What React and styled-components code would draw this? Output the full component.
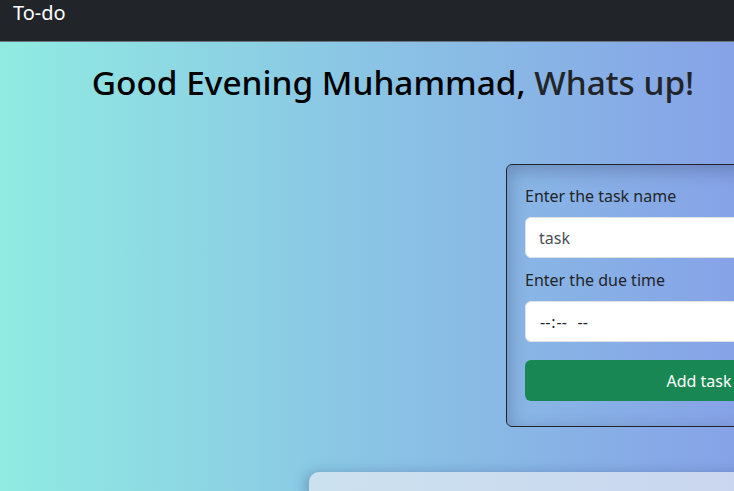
import styled, { createGlobalStyle } from 'styled-components';

const GlobalStyle = createGlobalStyle`
	html, body {
		margin: 0;
		padding: 0;
		overflow: hidden;
	}
	body {
		font-family: 'Noto Sans', 'Open Sans', sans-serif;
		color: #212529;
	}
`;

const App = () => {
	return (
		<>
			<GlobalStyle />
			<Navbar>
				<Brand>To-do</Brand>
			</Navbar>
			<Main>
				<Title>
					<Greeting>Good Evening Muhammad,</Greeting> Whats up!
				</Title>
				<FormRow>
					<Spacer />
					<Card>
						<Label htmlFor='task'>Enter the task name</Label>
						<Input id='task' type='text' placeholder='task' />
						<Label htmlFor='due'>Enter the due time</Label>
						<Input id='due' type='time' />
						<Button>Add task</Button>
					</Card>
				</FormRow>
				<ListRow>
					<Spacer $w='309px' />
					<TaskList />
				</ListRow>
			</Main>
		</>
	);
};

export default App;

const Navbar = styled.nav`
	height: 42px;
	box-sizing: border-box;
	background-color: #212529;
	border-bottom: 1px solid #6c757d;
	display: flex;
	align-items: flex-start;
	padding: 0 13px;
`;

const Brand = styled.span`
	color: #fff;
	font-size: 20px;
	line-height: 26px;
`;

const Main = styled.main`
	height: 449px;
	width: 1000px;
	background: linear-gradient(to right, #90ebe2 0px, #8bc8e4 330px, #86a2e7 740px, #86a2e7 100%);
	overflow: hidden;
`;

const Title = styled.h1`
	width: 786px;
	margin: 0;
	padding-top: 20px;
	text-align: center;
	font-size: 33.4px;
	font-weight: 500;
	line-height: 40px;
	color: #212529;
`;

const Greeting = styled.span`
	color: #000;
`;

const FormRow = styled.div`
	display: flex;
	margin-top: 62px;
`;

const Spacer = styled.div`
	width: ${p => p.$w || '506px'};
	flex: none;
`;

const Card = styled.div`
	width: 386px;
	box-sizing: border-box;
	padding: 19px 18px 25px;
	border: 1px solid #212529;
	border-radius: 6px;
	box-shadow: inset 2px 5px 18px rgba(40, 50, 90, 0.32);
	display: flex;
	flex-direction: column;
`;

const Label = styled.label`
	font-size: 16px;
	line-height: 24px;
	color: #212529;
	margin-bottom: 9px;
`;

const Input = styled.input`
	height: 41px;
	box-sizing: border-box;
	border: 1px solid #dee2e6;
	border-radius: 6px;
	padding: 0 13px;
	font-family: inherit;
	font-size: 16px;
	color: #212529;
	background: #fff;
	margin-bottom: 10px;
	outline: none;
	&::placeholder {
		color: #495057;
	}
	&::-webkit-datetime-edit-ampm-field {
		margin-left: 6px;
	}
`;

const Button = styled.button`
	margin-top: 8px;
	height: 41px;
	border: none;
	border-radius: 6px;
	background-color: #198754;
	color: #fff;
	font-family: inherit;
	font-size: 16px;
	cursor: pointer;
`;

const ListRow = styled.div`
	display: flex;
	margin-top: 45px;
`;

const TaskList = styled.div`
	width: 600px;
	height: 80px;
	background-color: rgba(228, 234, 242, 0.72);
	border-radius: 10px;
	box-shadow: -4px 0 12px rgba(60, 90, 140, 0.35);
`;
